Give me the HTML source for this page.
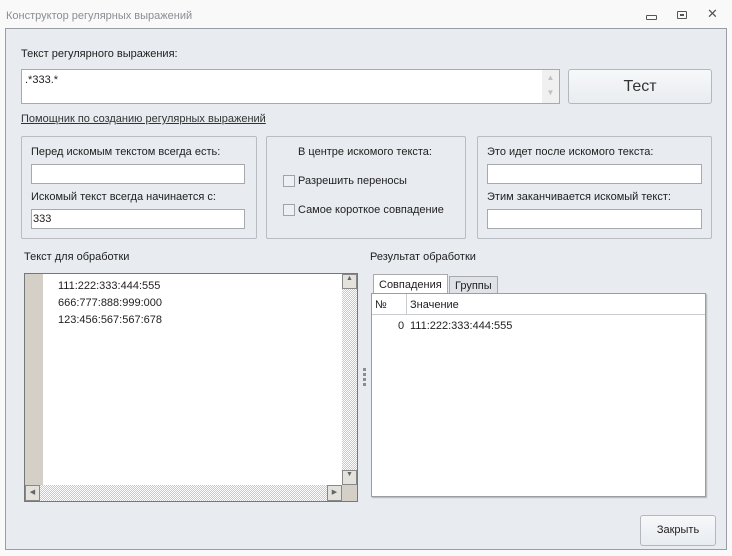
<!DOCTYPE html>
<html><head><meta charset="utf-8"><style>
*{box-sizing:border-box;margin:0;padding:0}
body{width:732px;height:556px;background:#f9f9f9;font-family:"Liberation Sans","DejaVu Sans",sans-serif;font-size:11px;color:#1e1e1e;position:relative;overflow:hidden}
.a{position:absolute}
.inp{position:absolute;background:#fff;border:1px solid #a6a9b0}
.grp{position:absolute;border:1px solid #b9bcc3;border-radius:2px}
.btn{position:absolute;border:1px solid #b4b7bd;border-radius:3px;background:linear-gradient(#f6f8fa,#e9ecf0);text-align:center}
.cb{position:absolute;width:12px;height:12px;border:1px solid #a0a3a8;background:#eef0f3}
.chk{background:repeating-conic-gradient(#c8c8c8 0 25%,#fff 0 50%) 0 0/2px 2px}
</style></head><body>
<div class="a" style="left:6px;top:10px;color:#8a8d93;font-size:11px">Конструктор регулярных выражений</div>
<div class="a" style="left:646px;top:15px;width:11px;height:5px;border:1px solid #555;border-radius:1px"></div>
<div class="a" style="left:677px;top:11px;width:10px;height:8px;border:1px solid #555;border-radius:1px"><div class="a" style="left:2px;top:2px;width:4px;height:2px;background:#555"></div></div>
<div class="a" style="left:707px;top:6px;font-size:13px;color:#555">✕</div>
<div class="a" style="left:5px;top:28px;width:722px;height:522px;background:#e8ebf0;border:1px solid #9a9da4"></div>
<div class="a" style="left:21px;top:48px;font-size:11px">Текст регулярного выражения:</div>
<div class="inp" style="left:21px;top:69px;width:539px;height:35px"><div class="a" style="left:3px;top:4px;font-size:11px">.*333.*</div><div class="a" style="right:0;top:0;width:17px;height:33px;background:#f0f0f0;color:#c0c0c0;font-size:8px;text-align:center;line-height:15px">▲<br>▼</div></div>
<div class="btn" style="left:568px;top:69px;width:144px;height:35px;font-size:16px;line-height:33px;color:#333">Тест</div>
<div class="a" style="left:21px;top:113px;font-size:11px;text-decoration:underline;color:#333">Помощник по созданию регулярных выражений</div>
<div class="grp" style="left:21px;top:136px;width:236px;height:103px"></div>
<div class="grp" style="left:266px;top:136px;width:200px;height:103px"></div>
<div class="grp" style="left:477px;top:136px;width:235px;height:103px"></div>
<div class="a" style="left:31px;top:146px">Перед искомым текстом всегда есть:</div>
<div class="inp" style="left:31px;top:164px;width:214px;height:20px"></div>
<div class="a" style="left:31px;top:191px">Искомый текст всегда начинается с:</div>
<div class="inp" style="left:31px;top:209px;width:214px;height:20px"><div class="a" style="left:1px;top:3px">333</div></div>
<div class="a" style="left:298px;top:146px">В центре искомого текста:</div>
<div class="cb" style="left:283px;top:175px"></div><div class="a" style="left:298px;top:175px">Разрешить переносы</div>
<div class="cb" style="left:283px;top:204px"></div><div class="a" style="left:298px;top:204px">Самое короткое совпадение</div>
<div class="a" style="left:487px;top:146px">Это идет после искомого текста:</div>
<div class="inp" style="left:487px;top:164px;width:215px;height:20px"></div>
<div class="a" style="left:487px;top:191px">Этим заканчивается искомый текст:</div>
<div class="inp" style="left:487px;top:209px;width:215px;height:20px"></div>
<div class="a" style="left:24px;top:251px">Текст для обработки</div>
<div class="a" style="left:24px;top:273px;width:334px;height:229px;background:#fff;border:1px solid #777">
 <div class="a" style="left:0;top:0;width:18px;height:227px;background:#d4d0c8"></div>
 <div class="a" style="left:33px;top:4px;line-height:17px;font-size:11px">111:222:333:444:555<br>666:777:888:999:000<br>123:456:567:567:678</div>
 <div class="a chk" style="left:317px;top:0;width:15px;height:211px"></div>
 <div class="a" style="left:317px;top:0;width:15px;height:15px;background:#e4e2dc;border:1px solid #888;font-size:7px;text-align:center;color:#666">▲</div>
 <div class="a" style="left:317px;top:196px;width:15px;height:15px;background:#e4e2dc;border:1px solid #888;font-size:7px;text-align:center;color:#666">▼</div>
 <div class="a chk" style="left:0;top:211px;width:317px;height:16px"></div>
 <div class="a" style="left:0;top:211px;width:15px;height:16px;background:#e4e2dc;border:1px solid #888;font-size:7px;color:#666;line-height:14px;text-align:center">◀</div>
 <div class="a" style="left:302px;top:211px;width:15px;height:16px;background:#e4e2dc;border:1px solid #888;font-size:7px;color:#666;line-height:14px;text-align:center">▶</div>
 <div class="a" style="left:317px;top:211px;width:15px;height:16px;background:#d4d0c8"></div>
</div>
<div class="a" style="left:363px;top:368px;width:3px;height:3px;background:#8a8d93"></div>
<div class="a" style="left:363px;top:373px;width:3px;height:3px;background:#8a8d93"></div>
<div class="a" style="left:363px;top:378px;width:3px;height:3px;background:#8a8d93"></div>
<div class="a" style="left:363px;top:383px;width:3px;height:3px;background:#8a8d93"></div>
<div class="a" style="left:370px;top:251px">Результат обработки</div>
<div class="a" style="left:373px;top:274px;width:75px;height:21px;background:#fff;border:1px solid #aaa;border-bottom:none;padding:4px 0 0 5px">Совпадения</div>
<div class="a" style="left:449px;top:276px;width:49px;height:18px;background:#dfe2e6;border:1px solid #aaa;border-bottom:none;padding:3px 0 0 5px">Группы</div>
<div class="a" style="left:371px;top:293px;width:335px;height:204px;background:#fff;border:1px solid #9a9da4;box-shadow:1px 1px 1px #b0b3b8">
 <div class="a" style="left:0;top:0;width:333px;height:21px;border-bottom:1px solid #c8cbd0"></div>
 <div class="a" style="left:34px;top:0;width:1px;height:21px;background:#c8cbd0"></div>
 <div class="a" style="left:3px;top:5px">№</div>
 <div class="a" style="left:38px;top:5px">Значение</div>
 <div class="a" style="left:26px;top:26px">0</div>
 <div class="a" style="left:38px;top:26px">111:222:333:444:555</div>
</div>
<div class="btn" style="left:640px;top:515px;width:76px;height:31px;line-height:29px;font-size:11px">Закрыть</div>
</body></html>
